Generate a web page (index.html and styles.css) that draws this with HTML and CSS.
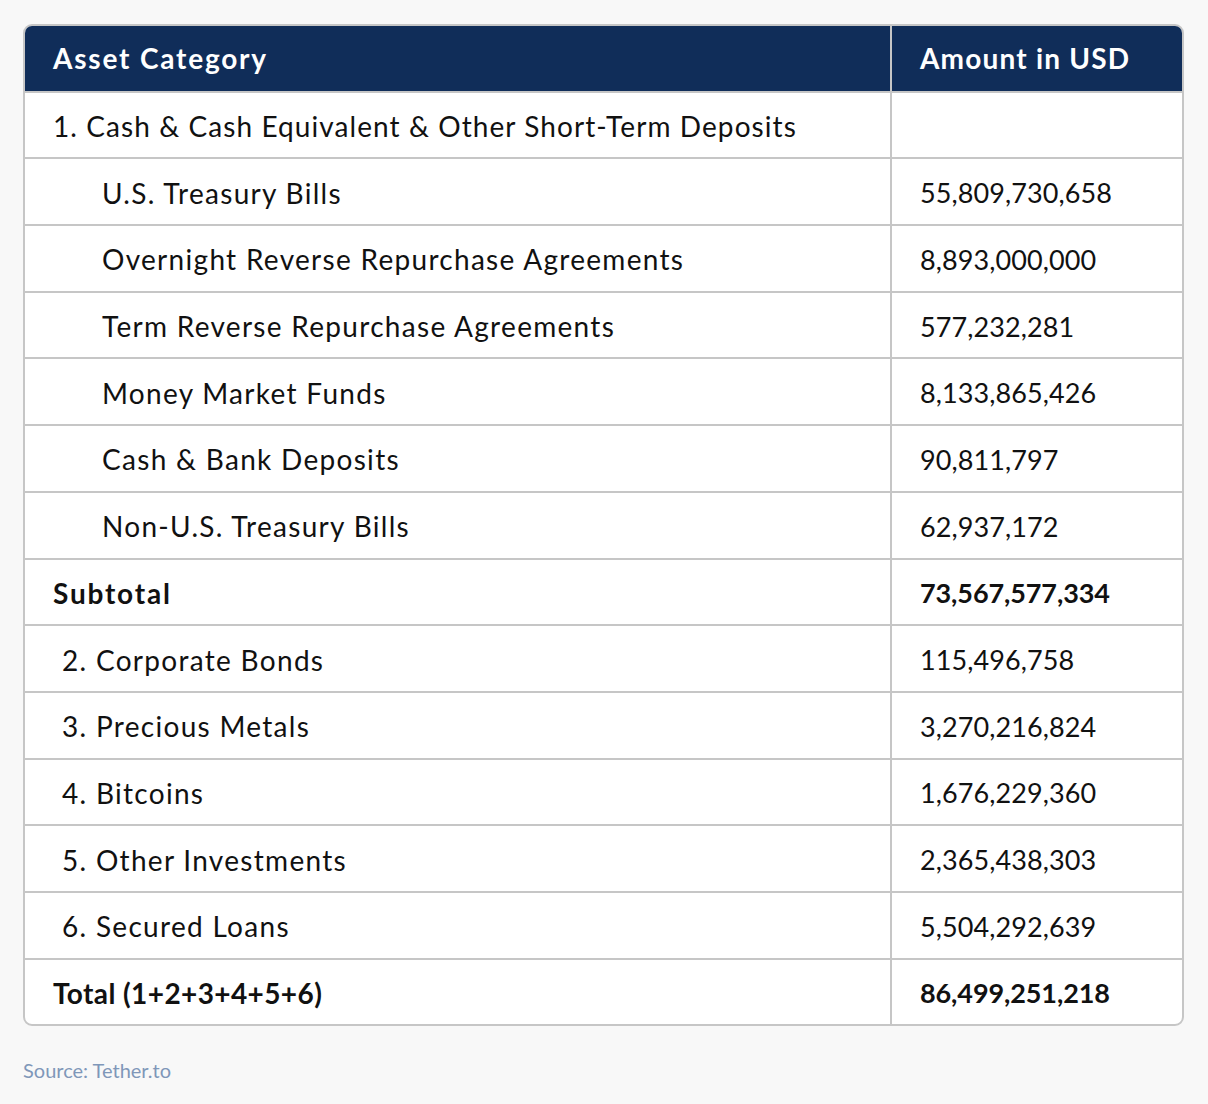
FILE: index.html
```html
<!DOCTYPE html>
<html lang="en">
<head>
<meta charset="utf-8">
<title>Tether Assets</title>
<link rel="stylesheet" href="styles.css">
</head>
<body>
<div class="page">
  <div class="card">
    <table class="assets">
      <thead>
        <tr><th class="col-cat">Asset Category</th><th class="col-amt">Amount in USD</th></tr>
      </thead>
      <tbody>
        <tr><td class="group">1. Cash &amp; Cash Equivalent &amp; Other Short-Term Deposits</td><td></td></tr>
        <tr><td class="sub">U.S. Treasury Bills</td><td>55,809,730,658</td></tr>
        <tr><td class="sub">Overnight Reverse Repurchase Agreements</td><td>8,893,000,000</td></tr>
        <tr><td class="sub">Term Reverse Repurchase Agreements</td><td>577,232,281</td></tr>
        <tr><td class="sub">Money Market Funds</td><td>8,133,865,426</td></tr>
        <tr><td class="sub">Cash &amp; Bank Deposits</td><td>90,811,797</td></tr>
        <tr><td class="sub">Non-U.S. Treasury Bills</td><td>62,937,172</td></tr>
        <tr class="bold"><td>Subtotal</td><td>73,567,577,334</td></tr>
        <tr><td class="num">2. Corporate Bonds</td><td>115,496,758</td></tr>
        <tr><td class="num">3. Precious Metals</td><td>3,270,216,824</td></tr>
        <tr><td class="num">4. Bitcoins</td><td>1,676,229,360</td></tr>
        <tr><td class="num">5. Other Investments</td><td>2,365,438,303</td></tr>
        <tr><td class="num">6. Secured Loans</td><td>5,504,292,639</td></tr>
        <tr class="bold last"><td class="total">Total (1+2+3+4+5+6)</td><td>86,499,251,218</td></tr>
      </tbody>
    </table>
  </div>
  <p class="source">Source: Tether.to</p>
</div>
</body>
</html>
```

FILE: styles.css
```css
html, body {
  margin: 0;
  padding: 0;
  background: #f8f8f8;
}
body {
  font-family: "Lato", "Noto Sans", sans-serif;
  color: #111111;
}
.page {
  padding: 24px 24px 0 23px;
}
.card {
  width: 1157px;
  border: 2px solid #c6c6c6;
  border-radius: 9px;
  overflow: hidden;
  background: #ffffff;
}
.assets {
  width: 100%;
  border-collapse: collapse;
  table-layout: fixed;
}
.col-cat { width: 837px; }
.assets th,
.assets td {
  height: 62.7px;
  padding: 2px 0 0 28px;
  text-align: left;
  font-size: 27px;
  letter-spacing: 0.1px;
  font-weight: 400;
  border-bottom: 2px solid #c6c6c6;
  box-sizing: content-box;
  white-space: nowrap;
}
.assets td:first-child,
.assets th:first-child {
  border-right: 2px solid #c6c6c6;
  font-size: 28px;
  letter-spacing: 1.3px;
}
.assets th {
  background: #102d59;
  color: #ffffff;
  font-weight: 700;
  padding-top: 0;
  height: 64.7px;
  border-bottom: 2px solid #c6c6c6;
}
.assets th:first-child {
  letter-spacing: 1.8px;
}
.assets th.col-amt {
  font-size: 28px;
  letter-spacing: 1.2px;
}
.assets td.group { letter-spacing: 1.08px; }
.assets td.sub { padding-left: 77px; }
.assets td.num { padding-left: 37px; }
.assets tr.bold td { font-weight: 700; letter-spacing: -0.1px; }
.assets tr.bold td:first-child { letter-spacing: 1.8px; }
.assets tr.bold td.total { letter-spacing: 0.4px; }
.assets tr.last td { border-bottom: none; }
.source {
  margin: 32px 0 0 0;
  font-size: 20px;
  color: #7f97b9;
}
```
